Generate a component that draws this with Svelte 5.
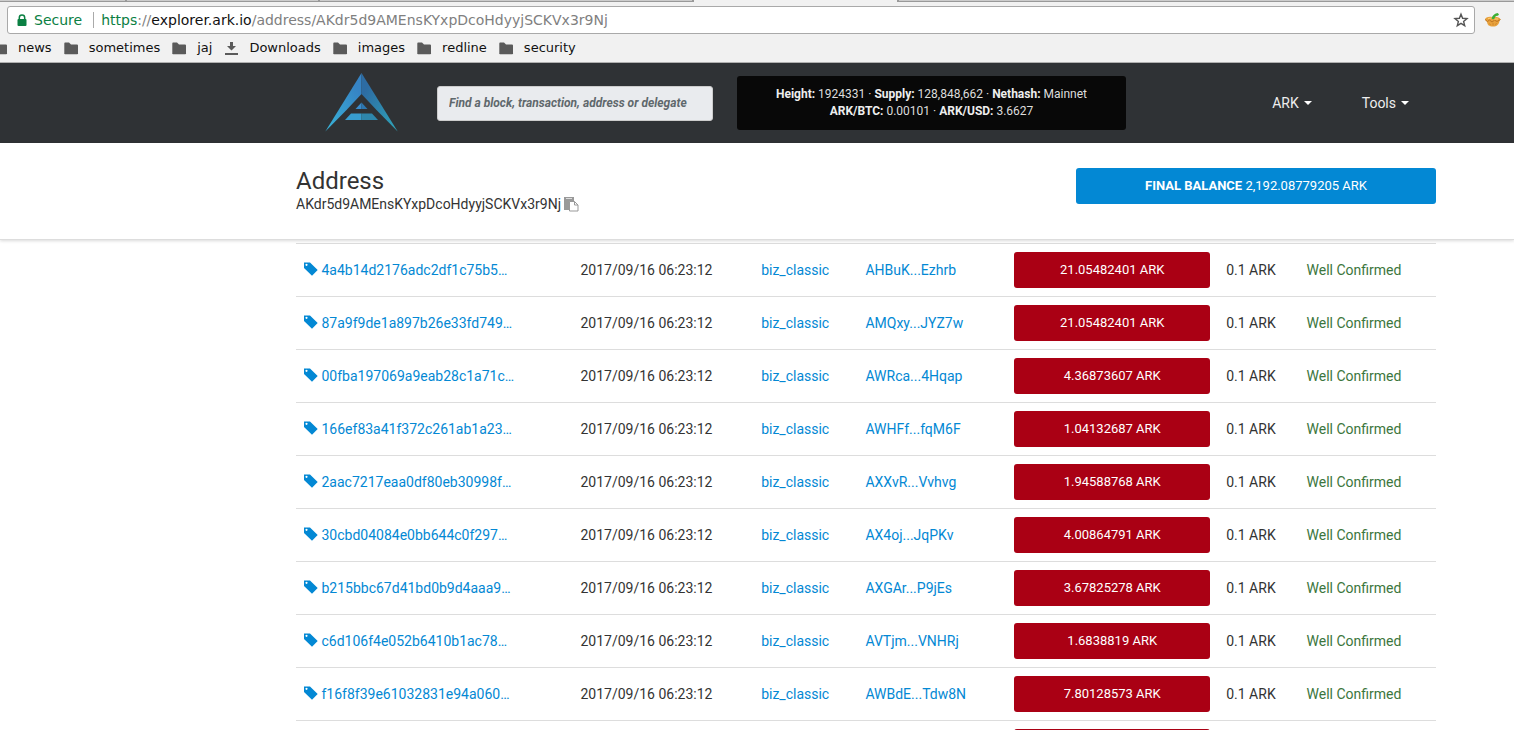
<script>
  const bookmarks = [
    { label: 'news', icon: 'folder' },
    { label: 'sometimes', icon: 'folder' },
    { label: 'jaj', icon: 'folder' },
    { label: 'Downloads', icon: 'download' },
    { label: 'images', icon: 'folder' },
    { label: 'redline', icon: 'folder' },
    { label: 'security', icon: 'folder' }
  ];

  const transactions = [
    { id: '4a4b14d2176adc2df1c75b5…', to: 'AHBuK...Ezhrb', amount: '21.05482401' },
    { id: '87a9f9de1a897b26e33fd749…', to: 'AMQxy...JYZ7w', amount: '21.05482401' },
    { id: '00fba197069a9eab28c1a71c…', to: 'AWRca...4Hqap', amount: '4.36873607' },
    { id: '166ef83a41f372c261ab1a23…', to: 'AWHFf...fqM6F', amount: '1.04132687' },
    { id: '2aac7217eaa0df80eb30998f…', to: 'AXXvR...Vvhvg', amount: '1.94588768' },
    { id: '30cbd04084e0bb644c0f297…', to: 'AX4oj...JqPKv', amount: '4.00864791' },
    { id: 'b215bbc67d41bd0b9d4aaa9…', to: 'AXGAr...P9jEs', amount: '3.67825278' },
    { id: 'c6d106f4e052b6410b1ac78…', to: 'AVTjm...VNHRj', amount: '1.6838819' },
    { id: 'f16f8f39e61032831e94a060…', to: 'AWBdE...Tdw8N', amount: '7.80128573' },
    { id: '', to: '', amount: '' }
  ];
</script>

<div class="screen">
  <header class="browser">
    <div class="tabs"><i></i><i></i><i></i><i></i></div>
    <div class="toolbar">
      <div class="omnibox">
        <svg class="lock" width="10" height="13" viewBox="0 0 10 13"><path d="M2.300 6V3.700a2.700 2.700 0 0 1 5.400 0V6" fill="none" stroke="#0b8043" stroke-width="1.500"/><rect x="0.500" y="5" width="9" height="7" rx="1" fill="#0b8043"/></svg>
        <span class="secure">Secure</span>
        <div class="url"><span class="scheme">https</span>://<b>explorer.ark.io</b>/address/AKdr5d9AMEnsKYxpDcoHdyyjSCKVx3r9Nj</div>
        <button class="plain" aria-label="Bookmark this page">
          <svg width="16" height="16" viewBox="0 0 16 16"><path d="M8 2.200l1.600 4.100 4.400.300-3.400 2.800 1.100 4.300L8 11.300l-3.700 2.400 1.100-4.300L2 6.600l4.400-.300z" fill="none" stroke="#555" stroke-width="1.400"/></svg>
        </button>
      </div>
      <button class="plain" aria-label="Extension">
        <svg width="18" height="16" viewBox="0 0 18 16">
          <path d="M1 7.500C1.500 5.500 4 4.500 8 5c4-.800 8 .300 8.500 2.500L15.500 9c-.500 3.500-2.500 5.500-6.500 5.500S3.500 13 3 10z" fill="#e8a13c"/>
          <path d="M1 7.500l2.500 2 2-1.500L8 10l2.500-1.800 2.500 1.300 3.500-2" fill="none" stroke="#b9701f" stroke-width="0.900"/>
          <path d="M5.500 11.500l1 1.500M9 11v2.500M12.500 11l-1 2" fill="none" stroke="#c98428" stroke-width="0.800"/>
          <path d="M4 6.500l4-.500M10 7l4 0" fill="none" stroke="#ffd071" stroke-width="1"/>
          <path d="M7.500 6.500C8.500 3.500 10 2 13.500 1l1.500 1.200-1 1.500c-2-.300-3 .500-3.500 3L9 7.300z" fill="#3daf35"/>
        </svg>
      </button>
    </div>
    <nav class="bookmarks">
      {#each bookmarks as b}
        <a href="#top">
          {#if b.icon === 'folder'}
            <svg width="15" height="13" viewBox="0 0 15 13"><path d="M1.500 0.500H5l2 2h6a1 1 0 0 1 1 1V11a1 1 0 0 1-1 1.300H1.300A1 1 0 0 1 .300 11V1.500a1 1 0 0 1 1.200-1z" fill="#5a5a5a"/></svg>
          {:else}
            <svg width="15" height="13" viewBox="0 0 15 13"><path d="M6 0h3v4h3L7.500 8.500 3 4h3zM1 11h13v2H1z" fill="#5a5a5a"/></svg>
          {/if}
          {b.label}
        </a>
      {/each}
    </nav>
  </header>

  <div class="navbar">
    <a class="logo" href="#top" aria-label="ARK">
      <svg width="74" height="60" viewBox="0 0 74 60">
        <defs>
          <linearGradient id="left" x1="1" y1="0" x2="0" y2="1"><stop offset="0.200" stop-color="#3684c5"/><stop offset="1" stop-color="#38b4d8"/></linearGradient>
          <linearGradient id="right" x1="0" y1="0" x2="1" y2="1"><stop offset="0.200" stop-color="#2d6ca3"/><stop offset="1" stop-color="#2fa6ba"/></linearGradient>
        </defs>
        <path d="M36.500 0V21L22 36.500 0.300 58.500z" fill="url(#left)"/>
        <path d="M36.500 0V21L51 36.500 72.700 58.500z" fill="url(#right)"/>
        <path d="M36.500 29.500l-6 6.500h6z" fill="#3a8bcb"/><path d="M36.500 29.500l6 6.500h-6z" fill="#2d77b0"/>
        <path d="M26 40.500H36.500v6.500H20z" fill="#389dce"/><path d="M36.500 40.500H47l6 6.500H36.500z" fill="#2e86ab"/>
      </svg>
    </a>
    <input class="search" type="text" aria-label="Search" placeholder="Find a block, transaction, address or delegate" />
    <div class="stats">
      <div><b>Height:</b> 1924331 · <b>Supply:</b> 128,848,662 · <b>Nethash:</b> Mainnet</div>
      <div><b>ARK/BTC:</b> 0.00101 · <b>ARK/USD:</b> 3.6627</div>
    </div>
    <nav class="menus">
      <button>ARK <i class="caret"></i></button>
      <button>Tools <i class="caret"></i></button>
    </nav>
  </div>

  <section class="summary">
    <div>
      <h1>Address</h1>
      <div class="address">
        AKdr5d9AMEnsKYxpDcoHdyyjSCKVx3r9Nj
        <button class="plain" aria-label="Copy address">
          <svg width="15" height="15" viewBox="0 0 15 15"><path d="M0 0h10v4H6v9H0z" fill="#999"/><path d="M2 1.500h6" stroke="#ddd"/><path d="M5.500 4.500h5l3.500 3.500v6H5.500zM10.500 4.500V8H14" fill="#fff" stroke="#999"/></svg>
        </button>
      </div>
    </div>
    <div class="balance"><b>FINAL BALANCE</b> 2,192.08779205 ARK</div>
  </section>

  <main>
    <table>
      <colgroup><col class="c-id" /><col class="c-date" /><col class="c-from" /><col class="c-to" /><col class="c-amount" /><col class="c-fee" /><col /></colgroup>
      <tbody>
        {#each transactions as t}
          <tr>
            {#if t.id}
              <td>
                <svg class="tag" width="14" height="14" viewBox="0 0 14 14"><path fill-rule="evenodd" d="M0 0.500h6L13.700 8 8 13.800 0 6zM2.500 1.700a1.100 1.100 0 1 0 .010 0z" fill="#0388d4"/></svg>
                <a href="#tx">{t.id}</a>
              </td>
              <td>2017/09/16 06:23:12</td>
              <td><a href="#from">biz_classic</a></td>
              <td><a href="#to">{t.to}</a></td>
              <td><div class="amount">{t.amount} ARK</div></td>
              <td>0.1 ARK</td>
              <td class="ok">Well Confirmed</td>
            {:else}
              <td colspan="4"></td><td><div class="amount"></div></td><td colspan="2"></td>
            {/if}
          </tr>
        {/each}
      </tbody>
    </table>
  </main>
</div>

<style>
  :global(body) { margin: 0; background: #fff; }
  * { box-sizing: border-box; }
  .screen { height: 100vh; display: flex; flex-direction: column; overflow: hidden; font: 14px/20px Roboto, sans-serif; color: #333; }
  a { color: #0388d4; text-decoration: none; }
  button { font: inherit; color: inherit; background: none; border: 0; padding: 0; }
  .plain { display: inline-flex; }
  svg { flex: none; }

  .browser { flex: none; background: #f1f1f1; border-bottom: 1px solid #b0b0b0; font-family: "DejaVu Sans", sans-serif; overflow: hidden; }
  .tabs { display: flex; height: 2px; border-bottom: 1px solid #999; background: #ccc; }
  .tabs i { width: 193px; height: 1px; border-right: 2px solid #999; }
  .tabs i:first-child { width: 127px; }
  .tabs i:nth-child(3) { width: 374px; }
  .tabs i:last-child { width: 205px; height: 2px; background: #f1f1f1; }
  .toolbar { display: flex; align-items: center; gap: 9px; padding: 4px 12px 0 7px; }
  .omnibox { flex: 1; display: flex; align-items: center; height: 28px; padding: 0 5px 0 9px; background: #fff; border: 1px solid #a9a9a9; border-radius: 3px; font-size: 14px; }
  .secure { color: #0b8043; margin-left: 7px; padding-right: 11px; margin-right: 7px; border-right: 1px solid #aaa; line-height: 16px; }
  .url { flex: 1; color: #808080; white-space: nowrap; }
  .url b { font-weight: 400; color: #111; }
  .scheme { color: #0b8043; }
  .bookmarks { display: flex; gap: 12px; margin-left: -7px; padding: 4px 0; font-size: 13px; }
  .bookmarks a { display: flex; align-items: center; gap: 10px; color: #111; }

  .navbar { flex: none; display: flex; align-items: center; height: 80px; padding: 0 105px 0 325px; background: #2f3235; color: #ddd; }
  .logo { display: flex; margin-right: 38px; }
  .search { width: 276px; height: 35px; padding: 0 11px; border: 1px solid #ccc; border-radius: 3px; background: #e9ebee; font: italic 700 12px Roboto, sans-serif; }
  .search::placeholder { color: #5f686c; opacity: 1; }
  .stats { flex: 0 1 389px; margin-left: 24px; padding: 10px 0; border-radius: 3px; background: #080808; font-size: 12px; line-height: 17px; text-align: center; color: #ddd; }
  .stats b { color: #eee; }
  .menus { margin-left: auto; display: flex; gap: 50px; color: #eee; }
  .menus button { display: flex; align-items: center; gap: 5px; }
  .caret { border: 4px solid transparent; border-top-color: #fff; border-bottom: 0; }

  .summary { flex: none; position: relative; display: flex; justify-content: space-between; align-items: flex-start; height: 97px; padding: 25px 78px 0 296px; background: #fff; border-bottom: 1px solid #ddd; box-shadow: 0 1px 3px rgba(0, 0, 0, 0.15); }
  h1 { margin: 0; font-size: 24px; line-height: 26px; font-weight: 400; }
  .address { display: flex; align-items: center; gap: 3px; }
  .balance, .amount { height: 36px; border-radius: 3px; color: #fff; font-size: 13px; line-height: 36px; text-align: center; }
  .balance { width: 360px; background: #0388d4; }
  .amount { background: #aa0014; }

  main { flex: 1; min-height: 0; overflow: hidden; padding: 3px 78px 0 296px; }
  table { width: 100%; table-layout: fixed; border-collapse: separate; border-spacing: 0; }
  td { padding: 8px; border-top: 1px solid #ddd; white-space: nowrap; }
  .c-id { width: 24.250%; } .c-date { width: 15.850%; } .c-from { width: 9.150%; } .c-to { width: 13.050%; }
  .c-amount { width: 18.600%; } .c-fee { width: 7.050%; }
  .tag { vertical-align: -1px; }
  .ok { color: #3c763d; }
</style>
